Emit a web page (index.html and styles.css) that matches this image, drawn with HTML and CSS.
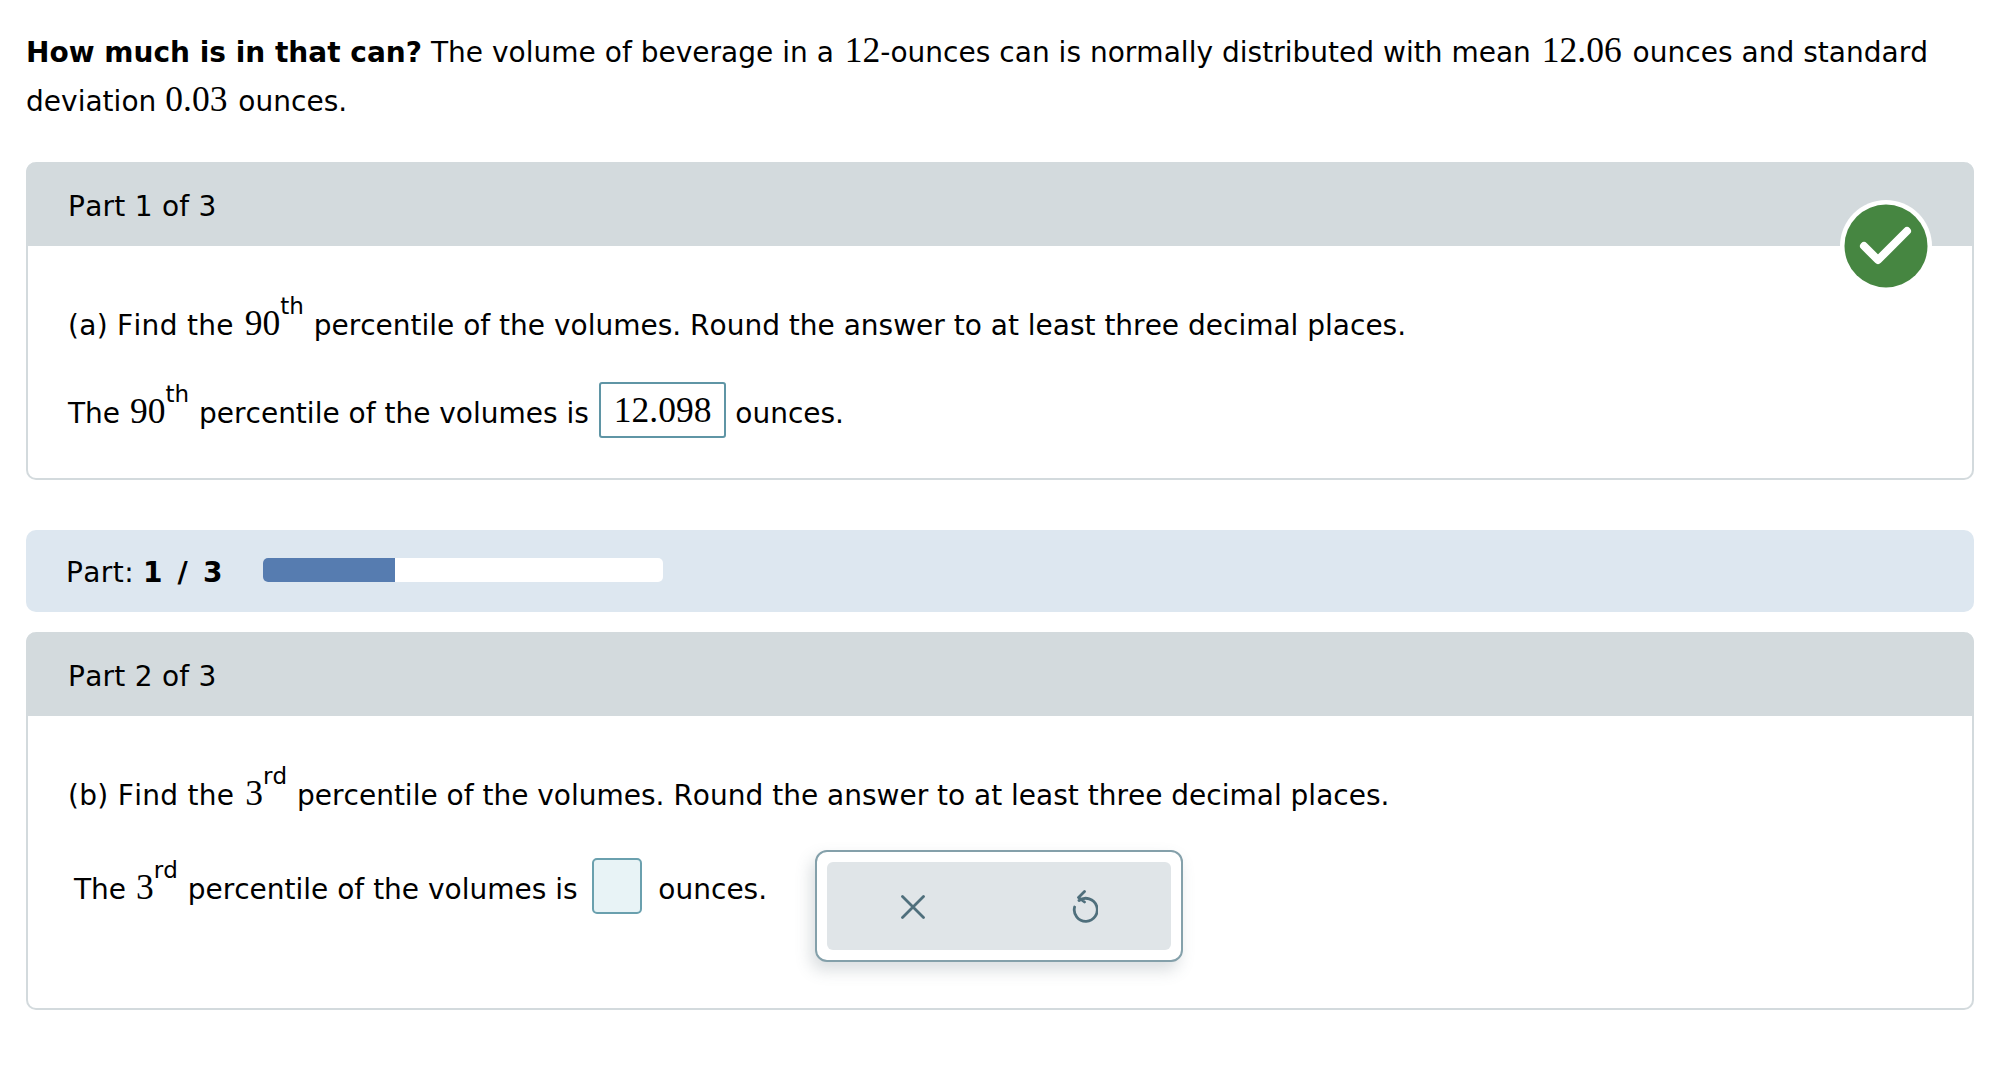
FILE: index.html
```html
<!DOCTYPE html>
<html lang="en">
<head>
<meta charset="utf-8">
<title>How much is in that can?</title>
<link rel="stylesheet" href="styles.css">
</head>
<body>
<main class="page">
  <p class="intro"><b>How much is in that can?</b> The volume of beverage in a <span class="m">12</span>-ounces can is normally distributed with mean <span class="m m-gap">12.06</span> ounces and standard deviation <span class="m m-gap m-tight">0.03</span> ounces.</p>

  <section class="card card-one">
    <header class="card-head">Part 1 of 3</header>
    <span class="done">
      <svg viewBox="0 0 92 92" width="92" height="92"><circle cx="46" cy="46" r="46" fill="#fff"/><circle cx="46" cy="46" r="41.5" fill="#468641"/><path d="M24 46 L38 60 L67 31" fill="none" stroke="#fff" stroke-width="8" stroke-linecap="round" stroke-linejoin="round"/></svg>
    </span>
    <div class="card-body">
      <p class="q"><span class="lead">(a) Find the</span> <span class="m">90</span><sup>th</sup> percentile of the volumes. Round the answer to at least three decimal places.</p>
      <p class="ans ans-a">The <span class="m">90</span><sup>th</sup> percentile of the volumes is <span class="filled m">12.098</span> ounces.</p>
    </div>
  </section>

  <div class="progress">
    <span class="progress-label"><span class="part-word">Part:</span> <b>1 / 3</b></span>
    <span class="track"><span class="fill"></span></span>
  </div>

  <section class="card card-two">
    <header class="card-head">Part 2 of 3</header>
    <div class="card-body">
      <p class="q"><span class="lead">(b) Find the</span> <span class="m">3</span><sup>rd</sup> percentile of the volumes. Round the answer to at least three decimal places.</p>
      <div class="ans-row">
        <p class="ans ans-b">The <span class="m">3</span><sup>rd</sup> percentile of the volumes is <span class="blank"></span> ounces.</p>
        <div class="tools">
          <div class="tools-inner">
            <span class="tool"><svg viewBox="0 0 24 24" width="24" height="24"><path d="M1.5 1.5 L22.5 22.5 M22.5 1.5 L1.5 22.5" fill="none" stroke="#4f6f7c" stroke-width="2.8" stroke-linecap="round"/></svg></span>
            <span class="tool"><svg viewBox="0 0 26 34" width="26" height="34"><path d="M7 10.5 A11.5 11.5 0 1 1 2.6 17 M12.5 1.5 L6.5 7.5 L12.5 12" fill="none" stroke="#4f6f7c" stroke-width="2.8" stroke-linecap="round" stroke-linejoin="round"/></svg></span>
          </div>
        </div>
      </div>
    </div>
  </section>
</main>
</body>
</html>
```

FILE: styles.css
```css
html, body { margin: 0; padding: 0; background: #fff; }
body { font-family: "DejaVu Sans", Verdana, sans-serif; font-size: 28px; color: #000; font-kerning: none; }
.page { padding: 27px 36px 0 26px; }
p { margin: 0; }
.intro { line-height: 47px; letter-spacing: .02px; }
.intro b { letter-spacing: 0; }
.m { font-family: "Liberation Serif", "Times New Roman", serif; font-size: 35.5px; margin-left: 2px; letter-spacing: 0; }
.m-gap { margin-right: 2px; }
.m-tight { margin-left: 0; }
.lead { letter-spacing: .3px; }
sup { font-size: 23px; line-height: 0; vertical-align: 21px; margin-right: 1px; }
.card { position: relative; border: 2px solid #d3dadd; border-top: 0; border-radius: 10px; }
.card-one { margin-top: 37px; height: 316px; }
.card-two { margin-top: 20px; height: 376px; }
.card-head { margin: 0 -2px; height: 84px; padding: 0 42px; background: #d3dadd; border-radius: 10px 10px 0 0; line-height: 90px; letter-spacing: .25px; }
.card-body { padding: 0 40px; }
.done { position: absolute; right: 40px; top: 38px; width: 92px; height: 92px; }
.done svg { display: block; }
.q { line-height: 48px; padding-top: 53px; }
.ans { line-height: 56px; }
.ans .m { margin-left: 1px; }
.ans sup { margin-right: 1px; }
.ans-a { margin-top: 31px; }
.ans .filled { display: inline-block; box-sizing: border-box; height: 56px; line-height: 53px; padding: 0 13px; border: 2px solid #5f95a5; border-radius: 3px; vertical-align: 2px; margin: 0 0 0 1px; position: relative; top: 1px; }
.progress { display: flex; align-items: center; gap: 40px; height: 80px; margin-top: 50px; padding: 2px 39px 0 40px; background: #dde7f0; border-radius: 10px; }
.progress b { word-spacing: 5.5px; }
.part-word { letter-spacing: .4px; }
.track { display: block; width: 400px; height: 24px; background: #fff; border-radius: 5px; overflow: hidden; margin-bottom: 4px; }
.fill { display: block; width: 132px; height: 24px; background: #567cb0; }
.ans-row { display: flex; align-items: flex-start; margin-top: 30px; }
.ans-b { padding: 9px 0 0 6px; }
.blank { display: inline-block; box-sizing: border-box; width: 50px; height: 56px; margin: 0 7px 0 6px; background: #e8f3f6; border: 2px solid #6aa0ae; border-radius: 5px; vertical-align: middle; position: relative; top: -5px; }
.tools { box-sizing: border-box; width: 368px; height: 112px; margin-left: 48px; padding: 10px; background: #fff; border: 2px solid #84a0aa; border-radius: 12px; box-shadow: -4px 8px 16px rgba(80,100,110,.22); }
.tools-inner { display: grid; grid-template-columns: 1fr 1fr; align-items: center; justify-items: center; height: 88px; background: #e0e5e8; border-radius: 6px; }
.tool { display: block; line-height: 0; padding-top: 2px; }
```
